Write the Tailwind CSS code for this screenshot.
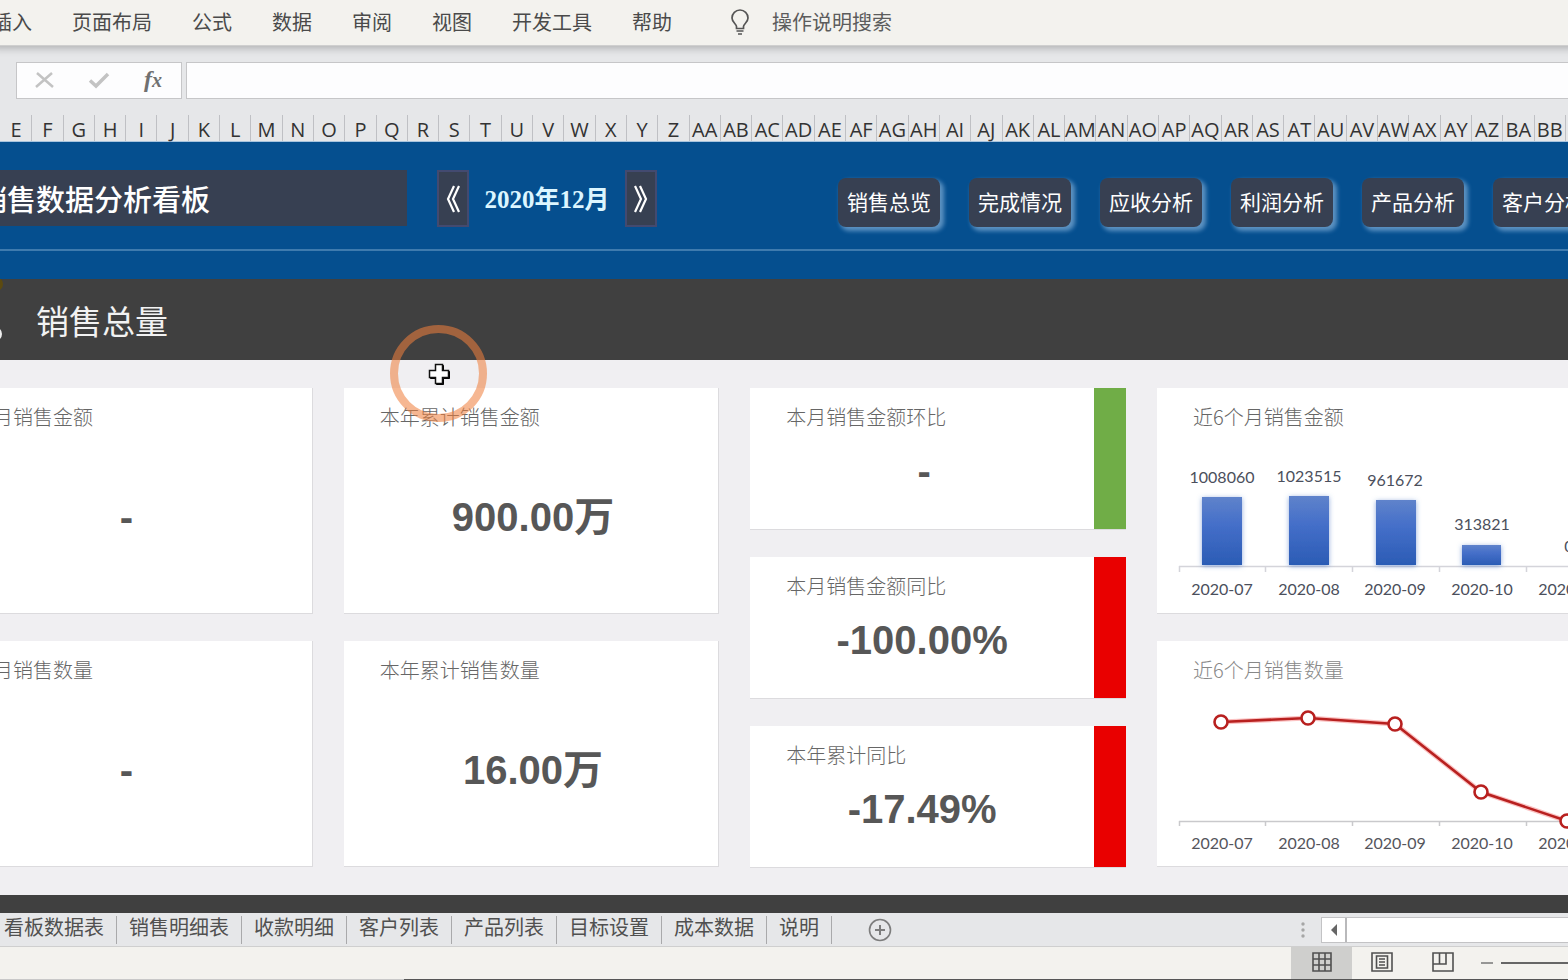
<!DOCTYPE html>
<html lang="zh-CN">
<head>
<meta charset="utf-8">
<title>销售数据分析看板</title>
<script src="https://cdn.jsdelivr.net/npm/@tailwindcss/browser@4"></script>
</head>
<body class="min-h-screen overflow-x-hidden bg-[#e6e7e9] font-['Noto_Sans_CJK_SC',sans-serif] text-[#444]">
<div class="relative flex min-h-screen flex-col overflow-hidden">

  <!-- Ribbon tabs -->
  <nav class="relative z-10 -mr-2 -ml-2 flex h-[46px] items-center gap-10 border-b border-[#cfcfcf] bg-[#f3f2ee] pb-0.5 text-xl text-[#4a4a4a] shadow-[0_2px_8px_rgba(0,0,0,0.25)]">
    <button class="shrink-0">插入</button>
    <button class="shrink-0">页面布局</button>
    <button class="shrink-0">公式</button>
    <button class="shrink-0">数据</button>
    <button class="shrink-0">审阅</button>
    <button class="shrink-0">视图</button>
    <button class="shrink-0">开发工具</button>
    <button class="shrink-0">帮助</button>
    <label class="ml-4 flex flex-1 items-center gap-5">
      <svg class="h-7 w-6 shrink-0" viewBox="0 0 24 28" fill="none" stroke="#555" stroke-width="1.7"><path d="M8.500 20.500v-2c0-2.500-4.500-4-4.500-8.500a8 8 0 0 1 16 0c0 4.500-4.500 6-4.500 8.500v2z M8.500 23h7 M10 26h4"/></svg>
      <input class="w-full bg-transparent outline-none placeholder:text-[#5c5c5c]" aria-label="操作说明搜索" placeholder="操作说明搜索">
    </label>
  </nav>

  <!-- Formula bar -->
  <div class="mt-4 flex h-[37px] gap-1 pl-4">
    <div class="flex w-[166px] items-center justify-between border border-[#c6c6c8] bg-[#fdfdfe] pr-4 pb-0.5 pl-4">
      <button aria-label="取消"><svg class="h-6 w-6" viewBox="0 0 24 24" fill="none" stroke="#c3c3c3" stroke-width="2.500"><path d="M4 5 20 19M19 5 3 19"/></svg></button>
      <button aria-label="输入"><svg class="h-6 w-6" viewBox="0 0 24 24" fill="none" stroke="#c3c3c3" stroke-width="3.500"><path d="M3 12.500 9 18 21 6"/></svg></button>
      <button class="w-6 font-['Liberation_Serif',serif] text-2xl leading-6 font-bold text-[#707070] italic" aria-label="插入函数">f<span class="text-xl">x</span></button>
    </div>
    <input class="min-w-0 flex-1 border border-r-0 border-[#c6c6c8] bg-[#fdfdfe] outline-none" aria-label="编辑栏">
  </div>

  <!-- Column headers -->
  <div id="cols" class="mt-4 flex h-[27px] border-b border-[#a9c4dd] pr-0.5 pl-px font-['Open_Sans',sans-serif] text-xl leading-[30px] text-[#333]"></div>

  <!-- Dashboard header -->
  <header class="h-[137px] bg-[#054f8f]">
    <div class="flex h-[109px] items-start border-b-2 border-[#3f7bae] pt-7">
      <h1 class="-ml-[22px] h-14 w-[429px] shrink-0 bg-[#374052] text-[29px] leading-[56px] font-medium whitespace-nowrap text-white">销售数据分析看板</h1>
      <button class="ml-[30px] h-[57px] w-8 shrink-0 border-2 border-[#434a70] bg-[#374052]" aria-label="上个月"><svg class="mx-auto h-7 w-5" viewBox="0 0 20 28" fill="none" stroke="#fff" stroke-width="2.200"><path d="M11 1 5 14l6 13M16 1l-6 13 6 13"/></svg></button>
      <span class="w-[156px] shrink-0 text-center font-['Liberation_Serif','Noto_Sans_CJK_SC',serif] text-[25px] leading-[60px] font-semibold text-[#dcf6ff]">2020年12月</span>
      <button class="h-[57px] w-8 shrink-0 border-2 border-[#434a70] bg-[#374052]" aria-label="下个月"><svg class="mx-auto h-7 w-5" viewBox="0 0 20 28" fill="none" stroke="#fff" stroke-width="2.200"><path d="M9 1l6 13-6 13M4 1l6 13-6 13"/></svg></button>
      <nav class="mt-2 ml-[181px] flex gap-[29px] text-[21px] text-white">
        <a href="#" class="h-[49px] w-[102px] shrink-0 rounded-lg bg-[#374052] text-center leading-[47px] shadow-[3px_3px_4px_1px_#5c92c2]">销售总览</a>
        <a href="#" class="h-[49px] w-[102px] shrink-0 rounded-lg bg-[#374052] text-center leading-[47px] shadow-[3px_3px_4px_1px_#5c92c2]">完成情况</a>
        <a href="#" class="h-[49px] w-[102px] shrink-0 rounded-lg bg-[#374052] text-center leading-[47px] shadow-[3px_3px_4px_1px_#5c92c2]">应收分析</a>
        <a href="#" class="h-[49px] w-[102px] shrink-0 rounded-lg bg-[#374052] text-center leading-[47px] shadow-[3px_3px_4px_1px_#5c92c2]">利润分析</a>
        <a href="#" class="h-[49px] w-[102px] shrink-0 rounded-lg bg-[#374052] text-center leading-[47px] shadow-[3px_3px_4px_1px_#5c92c2]">产品分析</a>
        <a href="#" class="h-[49px] w-[102px] shrink-0 rounded-lg bg-[#374052] text-center leading-[47px] shadow-[3px_3px_4px_1px_#5c92c2]">客户分析</a>
      </nav>
    </div>
  </header>

  <div class="flex h-[81px] items-center gap-8 bg-[#404040]">
    <svg class="h-[81px] w-1" viewBox="0 0 4 81" fill="none"><circle cx="-4" cy="5" r="7" fill="#5c4a10"/><circle cx="-5" cy="55" r="6" stroke="#eee" stroke-width="2"/></svg>
    <h2 class="text-[33px] leading-[80px] text-[#f2f2f2]">销售总量</h2>
  </div>

  <!-- Metric cards -->
  <main class="-mr-[152px] -ml-[63px] grid grid-cols-[376fr_376fr_376fr_563fr] gap-[31px] bg-[#f0eff2] py-7">
    <div class="flex flex-col gap-[27px]">
      <section class="h-[226px] border-r border-b border-[#dcdbde] bg-white pt-[13px]">
        <h3 class="pl-9 text-xl leading-8 font-light text-[#666]">本月销售金额</h3>
        <p class="mt-14 pl-1 text-center font-['Liberation_Sans','Noto_Sans_CJK_SC',sans-serif] text-[40px] leading-[56px] font-bold text-[#575757]">-</p>
      </section>
      <section class="h-[226px] border-r border-b border-[#dcdbde] bg-white pt-[13px]">
        <h3 class="pl-9 text-xl leading-8 font-light text-[#666]">本月销售数量</h3>
        <p class="mt-14 pl-1 text-center font-['Liberation_Sans','Noto_Sans_CJK_SC',sans-serif] text-[40px] leading-[56px] font-bold text-[#575757]">-</p>
      </section>
    </div>
    <div class="flex flex-col gap-[27px]">
      <section class="h-[226px] border-r border-b border-[#dcdbde] bg-white pt-[13px]">
        <h3 class="pl-9 text-xl leading-8 font-light text-[#666]">本年累计销售金额</h3>
        <p class="mt-14 pl-1 text-center font-['Liberation_Sans','Noto_Sans_CJK_SC',sans-serif] text-[40px] leading-[56px] font-bold text-[#575757]">900.00万</p>
      </section>
      <section class="h-[226px] border-r border-b border-[#dcdbde] bg-white pt-[13px]">
        <h3 class="pl-9 text-xl leading-8 font-light text-[#666]">本年累计销售数量</h3>
        <p class="mt-14 pl-1 text-center font-['Liberation_Sans','Noto_Sans_CJK_SC',sans-serif] text-[40px] leading-[56px] font-bold text-[#575757]">16.00万</p>
      </section>
    </div>
    <div class="flex flex-col gap-7">
      <section class="h-[141px] border-r-32 border-[#70ad47] bg-white pt-[13px] shadow-[0_1px_0_#dcdbde]">
        <h3 class="pl-9 text-xl leading-8 font-light text-[#666]">本月销售金额环比</h3>
        <p class="mt-2.5 pl-1 text-center font-['Liberation_Sans',sans-serif] text-[40px] leading-[56px] font-bold text-[#575757]">-</p>
      </section>
      <section class="h-[141px] border-r-32 border-[#e90000] bg-white pt-[13px] shadow-[0_1px_0_#dcdbde]">
        <h3 class="pl-9 text-xl leading-8 font-light text-[#666]">本月销售金额同比</h3>
        <p class="mt-2.5 text-center font-['Liberation_Sans',sans-serif] text-[40px] leading-[56px] font-bold text-[#575757]">-100.00%</p>
      </section>
      <section class="h-[141px] border-r-32 border-[#e90000] bg-white pt-[13px] shadow-[0_1px_0_#dcdbde]">
        <h3 class="pl-9 text-xl leading-8 font-light text-[#666]">本年累计同比</h3>
        <p class="mt-2.5 text-center font-['Liberation_Sans',sans-serif] text-[40px] leading-[56px] font-bold text-[#575757]">-17.49%</p>
      </section>
    </div>
    <div class="flex flex-col gap-[27px]">
      <section class="h-[226px] border-b border-[#dcdbde] bg-white pt-[13px]">
        <h3 class="pl-9 text-xl leading-8 font-light text-[#666]">近6个月销售金额</h3>
        <svg class="block h-[178px] w-[563px] font-['Lato',sans-serif] text-base" viewBox="1 45 563 178" text-anchor="middle" fill="#4b4f5c">
          <defs>
            <linearGradient id="bar" x1="0" y1="0" x2="0" y2="1"><stop offset="0" stop-color="#5f83cb"/><stop offset=".4" stop-color="#456fc9"/><stop offset="1" stop-color="#2b5cb5"/></linearGradient>
            <filter id="glow" x="-30%" y="-30%" width="160%" height="160%"><feDropShadow dx="0" dy="1" stdDeviation="2.500" flood-color="#4472c4" flood-opacity=".6"/></filter>
          </defs>
          <path d="M23 178.500H545M23.500 178v6M109.500 178v6M196.500 178v6M283.500 178v6M370.500 178v6M457.500 178v6" stroke="#d4d4da" stroke-width="1.500" fill="none"/>
          <g fill="url(#bar)" filter="url(#glow)"><rect x="46" y="109" width="40" height="68"/><rect x="133" y="108" width="40" height="69"/><rect x="220" y="112" width="40" height="65"/><rect x="306" y="157" width="39" height="20"/></g>
          <text x="66" y="95">1008060</text><text x="153" y="94">1023515</text><text x="239" y="98">961672</text><text x="326" y="142">313821</text><text x="413" y="164">0</text><text x="499" y="164">0</text>
          <text x="66" y="207">2020-07</text><text x="153" y="207">2020-08</text><text x="239" y="207">2020-09</text><text x="326" y="207">2020-10</text><text x="413" y="207">2020-11</text><text x="499" y="207">2020-12</text>
        </svg>
      </section>
      <section class="h-[226px] border-b border-[#dcdbde] bg-white pt-[13px]">
        <h3 class="pl-9 text-xl leading-8 font-light text-[#888]">近6个月销售数量</h3>
        <svg class="block h-[178px] w-[563px] font-['Lato',sans-serif] text-base" viewBox="1 45 563 178" text-anchor="middle" fill="#55555c">
          <path d="M23 180.500H545M23.500 180v5M109.500 180v5M196.500 180v5M283.500 180v5M370.500 180v5M457.500 180v5" stroke="#c9c9cc" stroke-width="1.500" fill="none"/>
          <g stroke="#f9a8a8" stroke-width="5" fill="none" opacity=".7"><path d="M65 81 152 77 239 83 325 151 411 180H499"/></g>
          <g stroke="#b8201f" stroke-width="2.600" fill="#fff"><path fill="none" d="M65 81 152 77 239 83 325 151 411 180H499"/><circle cx="65" cy="81" r="6.500"/><circle cx="152" cy="77" r="6.500"/><circle cx="239" cy="83" r="6.500"/><circle cx="325" cy="151" r="6.500"/><circle cx="411" cy="180" r="6.500"/><circle cx="499" cy="180" r="6.500"/></g>
          <text x="66" y="208">2020-07</text><text x="153" y="208">2020-08</text><text x="239" y="208">2020-09</text><text x="326" y="208">2020-10</text><text x="413" y="208">2020-11</text><text x="499" y="208">2020-12</text>
        </svg>
      </section>
    </div>
  </main>

  <div class="h-[18px] bg-[#404040]"></div>

  <!-- Sheet tabs -->
  <div class="flex h-[34px] items-center border-b border-[#cfcfcf] bg-[#e6e7e9] text-xl leading-[22px] text-[#505050]">
    <div class="-ml-2 flex shrink-0">
      <button class="border-r border-[#a9a9ab] px-3 pb-1.5">看板数据表</button>
      <button class="border-r border-[#a9a9ab] px-3 pb-1.5">销售明细表</button>
      <button class="border-r border-[#a9a9ab] px-3 pb-1.5">收款明细</button>
      <button class="border-r border-[#a9a9ab] px-3 pb-1.5">客户列表</button>
      <button class="border-r border-[#a9a9ab] px-3 pb-1.5">产品列表</button>
      <button class="border-r border-[#a9a9ab] px-3 pb-1.5">目标设置</button>
      <button class="border-r border-[#a9a9ab] px-3 pb-1.5">成本数据</button>
      <button class="border-r border-[#a9a9ab] px-3 pb-1.5">说明</button>
    </div>
    <button class="ml-9" aria-label="新工作表"><svg class="h-6 w-6" viewBox="0 0 24 24" fill="none" stroke="#7d7d7d" stroke-width="1.600"><circle cx="12" cy="12" r="10.500"/><path d="M12 7v10M7 12h10" stroke-width="2"/></svg></button>
    <svg class="mr-4 ml-auto h-5 w-1" viewBox="0 0 4 20" fill="#a6a6a6"><circle cx="2" cy="4" r="1.700"/><circle cx="2" cy="10" r="1.700"/><circle cx="2" cy="16" r="1.700"/></svg>
    <div class="flex h-[26px] w-[247px] border border-r-0 border-[#c3c3c5] bg-white">
      <button class="flex w-[25px] items-center justify-center border-r-2 border-[#b9b9bb]" aria-label="向左滚动"><svg class="h-3 w-2" viewBox="0 0 8 12" fill="#666"><path d="M7 0v12L1 6z"/></svg></button>
    </div>
  </div>

  <!-- Status bar -->
  <footer class="flex h-8 justify-end bg-[#f3f2ee]">
    <button class="flex w-[61px] items-center justify-center bg-[#cfcfcd] pb-0.5" aria-label="普通视图"><svg class="h-5 w-5" viewBox="0 0 20 20" fill="none" stroke="#505050" stroke-width="1.600"><path d="M1 1h18v18H1zM7 1v18M13 1v18M1 7h18M1 13h18"/></svg></button>
    <button class="flex w-[60px] items-center justify-center pb-0.5" aria-label="页面布局视图"><svg class="h-5 w-[22px]" viewBox="0 0 22 20" fill="none" stroke="#505050" stroke-width="1.600"><path d="M1 1h20v18H1zM5.500 4h11v12h-11zM8 7h6M8 10h6M8 13h6"/></svg></button>
    <button class="flex w-[61px] items-center justify-center pb-0.5" aria-label="分页预览"><svg class="h-5 w-[22px]" viewBox="0 0 22 20" fill="none" stroke="#505050" stroke-width="1.600"><path d="M1 1h20v18H1zM1 12h13V1M7.500 1v11"/></svg></button>
    <button class="flex w-[28px] items-center justify-center" aria-label="缩小"><svg class="h-3 w-3" viewBox="0 0 12 12" stroke="#777" stroke-width="1.500"><path d="M0 6h12"/></svg></button>
    <div class="flex w-[67px] items-center overflow-hidden"><input type="range" aria-label="缩放" class="h-0.5 w-full appearance-none bg-[#666] [&::-webkit-slider-thumb]:appearance-none"></div>
  </footer>
  <div class="flex h-0.5"><span class="w-[404px] bg-[#c8c8c8]"></span><span class="flex-1 bg-[#555]"></span></div>

  <!-- Pointer with click highlight -->
  <svg class="pointer-events-none absolute top-[325px] left-[390px] z-20 h-[98px] w-[98px]" viewBox="0 0 98 98" fill="none">
    <circle cx="48.500" cy="48.500" r="44.500" stroke="#ef7f3c" stroke-opacity=".56" stroke-width="8"/>
    <path d="M46.500 40.500h7v6h6v7h-6v6h-7v-6h-6v-7h6z" fill="#000" stroke="#000"/>
    <path d="M45.500 39.500h7v6h6v7h-6v6h-7v-6h-6v-7h6z" fill="#fff" stroke="#111" stroke-width="1.500"/>
  </svg>
</div>

<script>
  const letters = 'ABCDEFGHIJKLMNOPQRSTUVWXYZ'.split('');
  const names = [...letters.slice(4), ...letters.map(l => 'A' + l), 'BA', 'BB'];
  document.getElementById('cols').innerHTML = names.map(n =>
    `<div class="flex min-w-0 flex-1 [justify-content:safe_center] border-r border-[#bfc0c4]">${n}</div>`).join('');
</script>
</body>
</html>
